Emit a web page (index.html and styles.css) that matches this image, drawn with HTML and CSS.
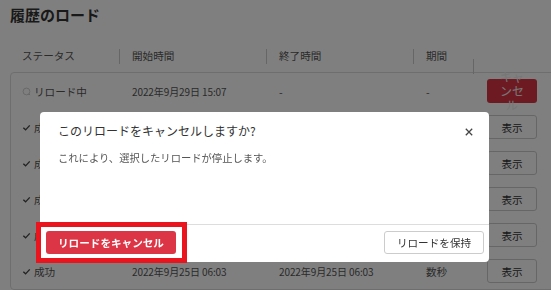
FILE: index.html
```html
<!DOCTYPE html>
<html lang="ja">
<head>
<meta charset="utf-8">
<title>履歴のロード</title>
<link rel="stylesheet" href="styles.css">
</head>
<body>
<div class="page">
  <h1 class="title">履歴のロード</h1>
  <div class="grid head">
    <div class="hcell">ステータス</div>
    <div class="hcell sep">開始時間</div>
    <div class="hcell sep">終了時間</div>
    <div class="hcell sep">期間</div>
    <div class="hcell sep"></div>
  </div>
  <div class="tbody">
    <div class="grid row">
      <div class="cell status"><svg class="ico" viewBox="0 0 10 10"><circle cx="5" cy="5" r="3.8" fill="none" stroke="#ccc" stroke-width="1"/><path d="M7.4 7.6 L8.8 9" stroke="#bbb" stroke-width="1"/></svg>リロード中</div>
      <div class="cell date">2022年9月29日 15:07</div>
      <div class="cell">-</div>
      <div class="cell">-</div>
      <div class="cell btncell"><button class="btn-red-sm"><span>キャンセル</span></button></div>
    </div>
    <div class="grid row">
      <div class="cell status"><svg class="ico" viewBox="0 0 10 10"><path d="M1.5 5.3 L4 7.6 L8.6 2.6" fill="none" stroke="#444" stroke-width="1.5"/></svg>成功</div>
      <div class="cell date">2022年9月28日 06:03</div>
      <div class="cell date">2022年9月28日 06:03</div>
      <div class="cell">数秒</div>
      <div class="cell btncell"><button class="btn-show">表示</button></div>
    </div>
    <div class="grid row">
      <div class="cell status"><svg class="ico" viewBox="0 0 10 10"><path d="M1.5 5.3 L4 7.6 L8.6 2.6" fill="none" stroke="#444" stroke-width="1.5"/></svg>成功</div>
      <div class="cell date">2022年9月27日 06:03</div>
      <div class="cell date">2022年9月27日 06:03</div>
      <div class="cell">数秒</div>
      <div class="cell btncell"><button class="btn-show">表示</button></div>
    </div>
    <div class="grid row">
      <div class="cell status"><svg class="ico" viewBox="0 0 10 10"><path d="M1.5 5.3 L4 7.6 L8.6 2.6" fill="none" stroke="#444" stroke-width="1.5"/></svg>成功</div>
      <div class="cell date">2022年9月26日 06:03</div>
      <div class="cell date">2022年9月26日 06:03</div>
      <div class="cell">数秒</div>
      <div class="cell btncell"><button class="btn-show">表示</button></div>
    </div>
    <div class="grid row">
      <div class="cell status"><svg class="ico" viewBox="0 0 10 10"><path d="M1.5 5.3 L4 7.6 L8.6 2.6" fill="none" stroke="#444" stroke-width="1.5"/></svg>成功</div>
      <div class="cell date">2022年9月26日 03:03</div>
      <div class="cell date">2022年9月26日 03:03</div>
      <div class="cell">数秒</div>
      <div class="cell btncell"><button class="btn-show">表示</button></div>
    </div>
    <div class="grid row">
      <div class="cell status"><svg class="ico" viewBox="0 0 10 10"><path d="M1.5 5.3 L4 7.6 L8.6 2.6" fill="none" stroke="#444" stroke-width="1.5"/></svg>成功</div>
      <div class="cell date">2022年9月25日 06:03</div>
      <div class="cell date">2022年9月25日 06:03</div>
      <div class="cell">数秒</div>
      <div class="cell btncell"><button class="btn-show">表示</button></div>
    </div>
  </div>
</div>

<div class="overlay"></div>

<div class="modal">
  <div class="modal-header">
    <div class="modal-title">このリロードをキャンセルしますか?</div>
    <svg class="close" viewBox="0 0 10 10"><path d="M1 1 L9 9 M9 1 L1 9" stroke="#444" stroke-width="1.6"/></svg>
  </div>
  <div class="modal-body">これにより、選択したリロードが停止します。</div>
  <div class="modal-footer">
    <button class="btn-danger">リロードをキャンセル</button>
    <button class="btn-default">リロードを保持</button>
  </div>
</div>

<div class="highlight"></div>
</body>
</html>
```

FILE: styles.css
```css
html, body {
  margin: 0;
  padding: 0;
  background: #fff;
  overflow: hidden;
  width: 551px;
  height: 290px;
  font-family: "Noto Sans CJK JP", "Noto Sans", sans-serif;
  color: #555;
}

.page {
  padding: 0 0 0 10px;
  width: 560px;
}

.title {
  margin: 0;
  padding-top: 6px;
  font-size: 15px;
  line-height: 18px;
  font-weight: 700;
  color: #333;
}

.grid {
  display: grid;
  grid-template-columns: 110px 147px 147px 60px 90px;
}

.head {
  margin-top: 22px;
  height: 20px;
  align-items: center;
}

.hcell {
  position: relative;
  padding-left: 12px;
  font-size: 10.6px;
  line-height: 20px;
  color: #555;
}

.hcell.sep::before {
  content: "";
  position: absolute;
  left: -1px;
  top: 3px;
  width: 1px;
  height: 15px;
  background: #ccc;
}

.tbody {
  margin-top: 6px;
  border: 1px solid #ddd;
  border-radius: 4px;
  width: 560px;
}

.row {
  height: 36px;
  align-items: center;
}

.cell {
  padding-left: 11px;
  font-size: 10.6px;
  color: #555;
  white-space: nowrap;
}

.status {
  display: flex;
  align-items: center;
  gap: 3px;
  font-size: 10.6px;
}

.ico {
  width: 9px;
  height: 9px;
}

.date {
  font-size: 10px;
  letter-spacing: -0.1px;
}

.btncell {
  padding-left: 12px;
}

.btn-red-sm {
  width: 50px;
  height: 24px;
  border: none;
  border-radius: 3px;
  background: #dc3545;
  color: #eee;
  padding: 0 11px;
  font-family: inherit;
  font-size: 12px;
  line-height: 14px;
  display: flex;
  align-items: center;
  justify-content: center;
  overflow: visible;
  white-space: normal;
}

.btn-red-sm span {
  display: block;
  flex: none;
  width: 26px;
  white-space: normal;
  word-break: break-all;
  line-break: anywhere;
  text-align: center;
}

.btn-show {
  width: 50px;
  height: 24px;
  border: 1px solid #ccc;
  border-radius: 3px;
  background: #fff;
  color: #333;
  font-family: inherit;
  font-size: 10.6px;
  padding: 0;
}

.overlay {
  position: fixed;
  inset: 0;
  background: rgba(0, 0, 0, 0.5);
}

.modal {
  position: absolute;
  left: 40px;
  top: 112px;
  width: 449px;
  height: 150px;
  background: #fff;
  border-radius: 4px;
  display: flex;
  flex-direction: column;
}

.modal-header {
  display: flex;
  justify-content: space-between;
  align-items: center;
  padding: 11px 16px 0 18px;
  height: 16px;
  box-sizing: content-box;
}

.modal-title {
  font-size: 12px;
  line-height: 16px;
  color: #333;
}

.close {
  width: 8px;
  height: 8px;
  margin-top: 2px;
}

.modal-body {
  flex: 1;
  padding: 11px 18px 0;
  font-size: 10.3px;
  line-height: 16px;
  color: #555;
}

.modal-footer {
  border-top: 1px solid #ddd;
  padding: 6px 5px 8px 6px;
  display: flex;
  justify-content: space-between;
  align-items: center;
}

.btn-danger {
  width: 130px;
  height: 23px;
  border: none;
  border-radius: 3px;
  background: #dc3545;
  color: #fff;
  font-family: inherit;
  font-weight: 700;
  font-size: 10.6px;
  padding: 0;
}

.btn-default {
  width: 100px;
  height: 23px;
  border: 1px solid #ccc;
  border-radius: 3px;
  background: #fff;
  color: #333;
  font-family: inherit;
  font-size: 10.6px;
  padding: 0;
}

.highlight {
  position: absolute;
  left: 36px;
  top: 222px;
  width: 151px;
  height: 41px;
  box-sizing: border-box;
  border: 5px solid #e9141d;
}
```
